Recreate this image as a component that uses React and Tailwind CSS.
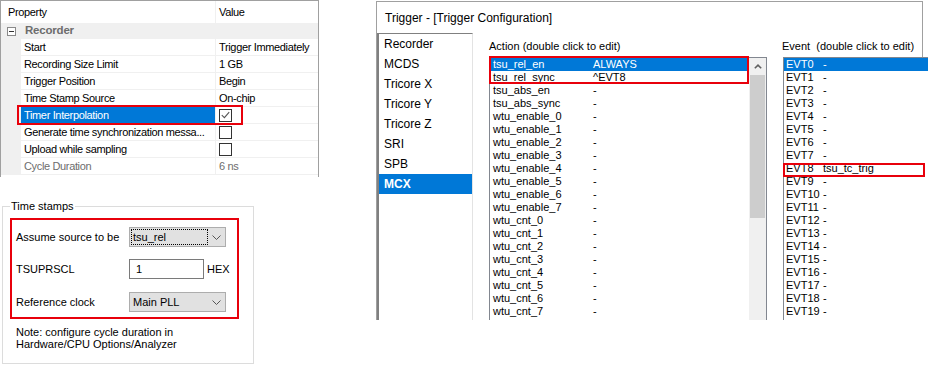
import React from 'react';

const PROPS = [
  { name: 'Start', value: 'Trigger Immediately' },
  { name: 'Recording Size Limit', value: '1 GB' },
  { name: 'Trigger Position', value: 'Begin' },
  { name: 'Time Stamp Source', value: 'On-chip' },
  { name: 'Timer Interpolation', check: true, checked: true, selected: true },
  { name: 'Generate time synchronization messa...', check: true },
  { name: 'Upload while sampling', check: true },
  { name: 'Cycle Duration', value: '6 ns', disabled: true },
];

const TABS = ['Recorder', 'MCDS', 'Tricore X', 'Tricore Y', 'Tricore Z', 'SRI', 'SPB', 'MCX'];

const ACTIONS = [
  ['tsu_rel_en', 'ALWAYS'],
  ['tsu_rel_sync', '^EVT8'],
  ['tsu_abs_en', '-'],
  ['tsu_abs_sync', '-'],
  ...[0, 1, 2, 3, 4, 5, 6, 7].map((i) => [`wtu_enable_${i}`, '-']),
  ...[0, 1, 2, 3, 4, 5, 6, 7].map((i) => [`wtu_cnt_${i}`, '-']),
];

const EVENTS = Array.from({ length: 20 }, (_, i) => [`EVT${i}`, i === 8 ? 'tsu_tc_trig' : '-']);

function CheckBox({ checked }) {
  return (
    <span className="flex h-[13px] w-[13px] items-center justify-center border border-[#333] bg-white">
      {checked && (
        <svg width="9" height="8" viewBox="0 0 9 8">
          <path d="M0.8 4.2 L3.4 6.6 L8.2 1.2" fill="none" stroke="#555" strokeWidth="1.1" />
        </svg>
      )}
    </span>
  );
}

function ChevronDown() {
  return (
    <svg width="9" height="5" viewBox="0 0 9 5">
      <path d="M0.5 0.5 L4.5 4.5 L8.5 0.5" fill="none" stroke="#555" />
    </svg>
  );
}

function Combo({ text, focused }) {
  return (
    <div className="flex h-[20px] w-[97px] items-center justify-between border border-[#adadad] bg-[#e1e1e1] pr-[4px]">
      {focused ? (
        <span className="ml-[1px] flex h-[16px] w-[77px] items-center border border-dotted border-black pl-[1px]">
          {text}
        </span>
      ) : (
        <span className="pl-[3px]">{text}</span>
      )}
      <ChevronDown />
    </div>
  );
}

export default function App() {
  return (
    <div className="flex h-[365px] w-[928px] overflow-hidden bg-white font-['Liberation_Sans',Arial,sans-serif] text-black">
      {/* Left: property grid + time stamps */}
      <div className="flex w-[376px] shrink-0 flex-col">
        <div className="relative h-[177px] w-[319px] border-l border-r border-t border-[#a0a0a0] text-[11px] tracking-[-0.35px]">
          <div className="flex h-[22px] items-center">
            <div className="flex h-full w-[215px] items-center border-r border-[#f0f0f0] pl-[7px]">Property</div>
            <div className="pl-[3px]">Value</div>
          </div>
          <div className="flex h-[16px] items-center bg-[#f0f0f0]">
            <span className="ml-[6px] flex h-[9px] w-[9px] items-center justify-center border border-[#8a8a8a] bg-white">
              <span className="h-px w-[5px] bg-[#333]" />
            </span>
            <span className="ml-[9px] text-[11.5px] font-bold tracking-[-0.2px] text-[#6d6d6d]">Recorder</span>
          </div>
          {PROPS.map((p) => (
            <div key={p.name} className="flex h-[17px]">
              <div className="w-[20px] shrink-0 bg-[#f0f0f0]" />
              <div
                className={`flex w-[195px] shrink-0 items-center overflow-hidden whitespace-nowrap border-b border-r border-[#f0f0f0] pl-[3px] ${
                  p.selected ? 'bg-[#0078d7] text-white' : p.disabled ? 'text-[#6d6d6d]' : ''
                }`}
              >
                {p.name}
              </div>
              <div
                className={`flex flex-1 items-center border-b border-[#f0f0f0] pl-[3px] ${
                  p.disabled ? 'text-[#6d6d6d]' : ''
                }`}
              >
                {p.check ? <CheckBox checked={p.checked} /> : p.value}
              </div>
            </div>
          ))}
          <div className="absolute left-[16px] top-[104px] h-[20px] w-[226px] border-2 border-[#e8000b]" />
        </div>

        <fieldset className="ml-[2px] mt-[22px] w-[252px] border border-[#dcdcdc] pb-[13px] text-[11px]">
          <legend className="ml-[7px] px-[1px] leading-[14px]">Time stamps</legend>
          <div className="ml-[7px] mt-[5px] flex w-[229px] flex-col border-2 border-[#e8000b] pb-[5px] pt-[7px]">
            <div className="flex h-[20px] items-center">
              <span className="w-[117px] pl-[4px]">Assume source to be</span>
              <Combo text="tsu_rel" focused />
            </div>
            <div className="mt-[12px] flex h-[20px] items-center">
              <span className="w-[117px] pl-[4px]">TSUPRSCL</span>
              <div className="flex h-[20px] w-[75px] items-center border border-[#7a7a7a] bg-white pl-[6px]">1</div>
              <span className="ml-[3px]">HEX</span>
            </div>
            <div className="mt-[13px] flex h-[20px] items-center">
              <span className="w-[117px] pl-[4px]">Reference clock</span>
              <Combo text="Main PLL" />
            </div>
          </div>
          <div className="mt-[7px] pl-[13px] leading-[12px]">
            <div>Note: configure cycle duration in</div>
            <div>Hardware/CPU Options/Analyzer</div>
          </div>
        </fieldset>
      </div>

      {/* Right: trigger configuration window */}
      <div className="mt-[1px] flex h-[319px] w-[547px] shrink-0 flex-col border-l border-r border-t border-[#a0a0a0]">
        <div className="flex h-[31px] items-center pl-[8px] text-[12px]">Trigger - [Trigger Configuration]</div>
        <div className="flex min-h-0 flex-1">
          {/* Tab list */}
          <div className="w-[96px] shrink-0 border-l-2 border-r border-t border-l-[#808080] border-r-[#e3e3e3] border-t-[#808080] text-[12px]">
            {TABS.map((t) => (
              <div
                key={t}
                className={`flex h-[20px] items-center pl-[5px] ${
                  t === 'MCX' ? 'bg-[#0078d7] font-bold text-white' : ''
                }`}
              >
                {t}
              </div>
            ))}
          </div>

          {/* Action list */}
          <div className="ml-[16px] flex w-[278px] shrink-0 flex-col text-[11px]">
            <div className="flex h-[24px] items-center pt-[2px]">Action (double click to edit)</div>
            <div className="relative flex flex-1 border-l border-r border-t border-[#828790]">
              <div className="w-[259px] shrink-0">
                {ACTIONS.map(([name, val], i) => (
                  <div
                    key={name}
                    className={`flex h-[13px] items-center leading-[13px] ${i === 0 ? 'bg-[#0078d7] text-white' : ''}`}
                  >
                    <span className="w-[103px] shrink-0 pl-[3px]">{name}</span>
                    <span>{val}</span>
                  </div>
                ))}
              </div>
              <div className="flex w-[17px] shrink-0 flex-col bg-[#f0f0f0]">
                <div className="flex h-[17px] items-center justify-center">
                  <svg width="8" height="5" viewBox="0 0 8 5">
                    <path d="M0.8 4.3 L4 1.2 L7.2 4.3" fill="none" stroke="#606060" strokeWidth="1.6" />
                  </svg>
                </div>
                <div className="mx-[1px] h-[143px] bg-[#cdcdcd]" />
              </div>
              <div className="absolute left-[-1px] top-[-2px] h-[28px] w-[260px] border-2 border-[#e8000b]" />
            </div>
          </div>

          {/* Event list */}
          <div className="ml-[16px] flex w-[145px] shrink-0 flex-col text-[11px]">
            <div className="-ml-px flex h-[24px] items-center whitespace-pre pt-[2px]">Event  (double click to edit)</div>
            <div className="relative flex-1 border-l border-t border-[#828790] bg-white">
              {EVENTS.map(([name, val], i) => (
                <div
                  key={name}
                  className={`flex h-[13px] items-center leading-[13px] ${i === 0 ? 'bg-[#0078d7] text-white' : ''}`}
                >
                  <span className="w-[39px] shrink-0 pl-[2px]">{name}</span>
                  <span>{val}</span>
                </div>
              ))}
              <div className="absolute left-[-1px] top-[105px] h-[14px] w-[142px] border-2 border-[#e8000b]" />
            </div>
          </div>
        </div>
      </div>
    </div>
  );
}
